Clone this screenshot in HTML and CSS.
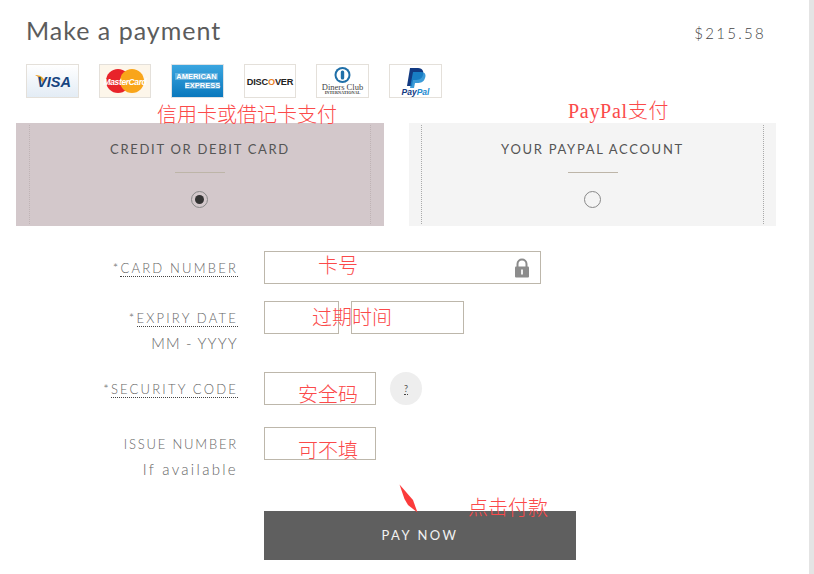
FILE: index.html
```html
<!DOCTYPE html>
<html lang="zh">
<head>
	<meta charset="UTF-8">
	<title>Make a payment</title>
	<link rel="stylesheet" href="styles.css">
</head>
<body>
	<div class="page">
		<div class="head">
			<h1>Make a payment</h1>
			<div class="price">$215.58</div>
		</div>

		<ul class="cards">
			<li class="visa">
				<svg width="51" height="32" viewBox="0 0 51 32">
					<path d="M8 10 C13 10 16 12 18 16 L16 20 C15 15 12 12 8 10Z" fill="#e9a02c"/>
					<text x="27" y="22" text-anchor="middle" class="t_visa">VISA</text>
				</svg>
			</li>
			<li class="mc">
				<svg width="50" height="32" viewBox="0 0 50 32">
					<circle cx="18" cy="16" r="12" fill="#e8232a"/>
					<circle cx="32" cy="16" r="12" fill="#f9a51a"/>
					<text x="25" y="19.500" text-anchor="middle" class="t_mc">MasterCard</text>
				</svg>
			</li>
			<li class="amex">
				<svg width="51" height="32" viewBox="0 0 51 32">
					<rect x="3" y="8" width="43" height="7" fill="#fff" fill-opacity=".25"/>
					<rect x="13" y="17" width="35" height="7" fill="#fff" fill-opacity=".25"/>
					<text x="24.500" y="14.300" text-anchor="middle" class="t_amex">AMERICAN</text>
					<text x="30.500" y="23.300" text-anchor="middle" class="t_amex">EXPRESS</text>
				</svg>
			</li>
			<li class="disc">
				<svg width="50" height="32" viewBox="0 0 50 32">
					<text x="25" y="20" text-anchor="middle" class="t_disc">DISC<tspan fill="#e8802a">O</tspan>VER</text>
				</svg>
			</li>
			<li>
				<svg width="51" height="32" viewBox="0 0 51 32">
					<circle cx="25.500" cy="10" r="8" fill="#1f6fa8"/>
					<circle cx="25.500" cy="10" r="6" fill="#fff"/>
					<rect x="23.800" y="5.500" width="3.400" height="9" rx="1.500" fill="#1f6fa8"/>
					<text x="25.500" y="24.500" text-anchor="middle" class="t_din">Diners Club</text>
					<text x="25.500" y="29" text-anchor="middle" class="t_din2">INTERNATIONAL</text>
				</svg>
			</li>
			<li>
				<svg width="51" height="32" viewBox="0 0 51 32">
					<path d="M20 3 H28 C33 3 34 7 33 10 C32 14 29 15 25 15 H23 L22 21 H17Z" fill="#123a82"/>
					<path d="M23 7 H31 C36 7 36 11 35 13 C34 17 31 18 27 18 H25 L24 23 H20Z" fill="#1a8ad0" fill-opacity=".85"/>
					<text x="25.500" y="30" text-anchor="middle" class="t_pp">Pay<tspan fill="#1a8ad0">Pal</tspan></text>
				</svg>
			</li>
		</ul>

		<div class="tabs">
			<div class="tab tab_on">
				<div class="tab_in">
					<div class="tab_title">CREDIT OR DEBIT CARD</div>
					<div class="tab_line"></div>
					<span class="radio radio_on"></span>
				</div>
			</div>
			<div class="tab">
				<div class="tab_in">
					<div class="tab_title">YOUR PAYPAL ACCOUNT</div>
					<div class="tab_line"></div>
					<span class="radio"></span>
				</div>
			</div>
		</div>

		<div class="form">
			<div class="row row_card">
				<div class="lab">*<u>CARD NUMBER</u></div>
				<div class="field">
					<div class="inp inp_card">
						<svg class="lock" width="16" height="20" viewBox="0 0 16 20">
							<path d="M3.500 9 V6 C3.500 0 12.500 0 12.500 6 V9" fill="none" stroke="#8c8c8c" stroke-width="2"/>
							<rect x="1" y="8.500" width="14" height="11" rx="1" fill="#8c8c8c"/>
							<rect x="7" y="11.500" width="2" height="5" fill="#eee"/>
						</svg>
					</div>
				</div>
			</div>
			<div class="row row_date">
				<div class="lab">*<u>EXPIRY DATE</u><span class="sub">MM - YYYY</span></div>
				<div class="field">
					<div class="inp inp_month"></div>
					<div class="inp inp_year"></div>
				</div>
			</div>
			<div class="row row_code">
				<div class="lab">*<u>SECURITY CODE</u></div>
				<div class="field">
					<div class="inp inp_short"></div>
					<div class="help"><u>?</u></div>
				</div>
			</div>
			<div class="row row_issue">
				<div class="lab">ISSUE NUMBER<span class="sub">If available</span></div>
				<div class="field">
					<div class="inp inp_short"></div>
				</div>
			</div>
			<div class="row row_pay">
				<div class="lab"></div>
				<div class="field"><div class="pay">PAY NOW</div></div>
			</div>
		</div>

		<!-- 截图上的红字标注 -->
		<span class="note n_credit">信用卡或借记卡支付</span>
		<span class="note n_paypal">PayPal支付</span>
		<span class="note n_card">卡号</span>
		<span class="note n_date">过期时间</span>
		<span class="note n_code">安全码</span>
		<span class="note n_issue">可不填</span>
		<span class="note n_pay">点击付款</span>
		<svg class="arrow" width="20" height="30" viewBox="0 0 20 30">
			<path d="M0.500 0.500 L14 16 L18.500 28.500 L9 21 L5.500 15Z" fill="#fb3b3b"/>
		</svg>
	</div>
</body>
</html>
```

FILE: styles.css
```css
*{
	margin: 0;
	padding: 0;
	box-sizing: border-box;
}
html, body{
	height: 100%;
	overflow: hidden;
}
body{
	background: #e4e4e4;
	font-family: "Lato", "Liberation Sans", sans-serif;
	color: #555;
}
.page{
	position: relative;
	width: 809px;
	height: 574px;
	background: #fff;
	padding-top: 14px;
}
.head{
	display: flex;
	justify-content: space-between;
	align-items: center;
	padding: 0 43px 0 26px;
}
.head h1{
	font-size: 25px;
	line-height: 32px;
	font-weight: 400;
	letter-spacing: 1px;
	color: #5c5c5c;
}
.price{
	font-size: 15px;
	font-weight: 300;
	letter-spacing: 2.300px;
	color: #444;
	margin-top: 6px;
}
.cards{
	list-style: none;
	display: flex;
	gap: 20px;
	margin: 18px 0 0 26px;
}
.cards li{
	width: 53px;
	height: 34px;
	border: 1px solid #e4e0da;
	background: #fff;
	overflow: hidden;
}
.cards li svg{
	display: block;
}
.cards li.visa{
	background: linear-gradient(#fff, #e3ecf5);
}
.cards li.mc{
	width: 52px;
	background: #fdf6ea;
}
.cards li.disc{
	width: 52px;
}
.cards li.amex{
	background: linear-gradient(#3ba6e0, #0a78bd);
	border-color: #dfe3e6;
}
.t_visa{
	font: italic 700 14.500px "Liberation Sans", sans-serif;
	fill: #17447f;
}
.t_mc{
	font: italic 700 8.500px "Liberation Sans", sans-serif;
	fill: #fff;
	letter-spacing: -.4px;
}
.t_amex{
	font: 700 7.500px "Liberation Sans", sans-serif;
	fill: #fff;
}
.t_disc{
	font: 700 9.200px "Liberation Sans", sans-serif;
	fill: #222;
	letter-spacing: -.2px;
}
.t_din{
	font: 8.500px "Liberation Serif", serif;
	fill: #444;
}
.t_din2{
	font: 700 4.200px "Liberation Serif", serif;
	fill: #444;
}
.t_pp{
	font: italic 700 8.500px "Liberation Sans", sans-serif;
	fill: #123a82;
}
.tabs{
	display: flex;
	gap: 25px;
	margin: 25px 0 0 16px;
}
.tab{
	width: 368px;
	height: 103px;
	padding: 2px 13px;
	background: #f4f4f4;
}
.tab + .tab{
	width: 367px;
	padding: 2px 12px;
}
.tab_on{
	background: #d3c8cb;
}
.tab_in{
	height: 99px;
	display: flex;
	flex-direction: column;
	align-items: center;
	padding-top: 15px;
	border-left: 1px dotted #aaa;
	border-right: 1px dotted #aaa;
}
.tab_on .tab_in{
	border-color: #bfb3b5;
}
.tab_title{
	font-size: 13px;
	line-height: 18px;
	font-weight: 400;
	letter-spacing: 1.700px;
	color: #555;
}
.tab_line{
	width: 50px;
	height: 1px;
	margin-top: 14px;
	background: #bdb5a8;
}
.radio{
	width: 17px;
	height: 17px;
	margin-top: 18px;
	border: 1px solid #888;
	border-radius: 50%;
	background: #f4f4f4;
}
.radio_on{
	position: relative;
	margin-right: 2px;
	background: #d3c8cb;
}
.radio_on::after{
	content: "";
	position: absolute;
	top: 3px;
	left: 3px;
	width: 9px;
	height: 9px;
	border-radius: 50%;
	background: #333;
}
.form{
	margin-top: 25px;
}
.row{
	display: grid;
	grid-template-columns: 238px 1fr;
	column-gap: 26px;
}
.row_card{
	height: 50px;
}
.row_date{
	height: 71px;
}
.row_code{
	height: 55px;
}
.row_issue{
	height: 84px;
}
.lab{
	text-align: right;
	font-size: 13px;
	line-height: 18px;
	font-weight: 300;
	letter-spacing: 2.200px;
	color: #666;
	padding-top: 8px;
}
.row_issue .lab{
	letter-spacing: 1.800px;
}
.lab u{
	text-decoration: none;
	border-bottom: 1px dotted #444;
}
.sub{
	display: block;
	margin-top: 7px;
	font-size: 15px;
	letter-spacing: 1.200px;
	color: #666;
}
.row_issue .sub{
	margin-top: 7px;
	letter-spacing: 2.300px;
}
.field{
	display: flex;
	align-items: flex-start;
}
.inp{
	position: relative;
	height: 33px;
	border: 1px solid #bdb7ab;
	background: #fff;
}
.inp_card{
	width: 277px;
}
.inp_month{
	width: 75px;
}
.inp_year{
	width: 113px;
	margin-left: 12px;
}
.inp_short{
	width: 112px;
}
.lock{
	position: absolute;
	top: 6px;
	right: 10px;
}
.help{
	width: 32px;
	height: 33px;
	margin-left: 14px;
	border-radius: 50%;
	background: #eee;
	text-align: center;
	font-size: 9px;
	line-height: 33px;
	color: #555;
}
.help u{
	text-decoration: none;
	border-bottom: 1px dotted #444;
}
.pay{
	width: 312px;
	height: 49px;
	background: #5f5f5f;
	color: #f2f2f2;
	text-align: center;
	font-size: 13px;
	line-height: 48px;
	letter-spacing: 2.500px;
}
.note{
	position: absolute;
	font-family: "Noto Sans CJK SC", sans-serif;
	font-size: 20px;
	line-height: 24px;
	font-weight: 300;
	color: #fb4a4a;
	white-space: nowrap;
}
.n_credit{
	left: 157px;
	top: 102px;
}
.n_paypal{
	left: 568px;
	top: 99px;
	font-family: "Liberation Serif", "Noto Sans CJK SC", serif;
	letter-spacing: .7px;
}
.n_card{
	left: 318px;
	top: 253px;
}
.n_date{
	left: 312px;
	top: 305px;
}
.n_code{
	left: 298px;
	top: 382px;
}
.n_issue{
	left: 298px;
	top: 438px;
}
.n_pay{
	left: 468px;
	top: 495px;
}
.arrow{
	position: absolute;
	left: 399px;
	top: 484px;
}
```
